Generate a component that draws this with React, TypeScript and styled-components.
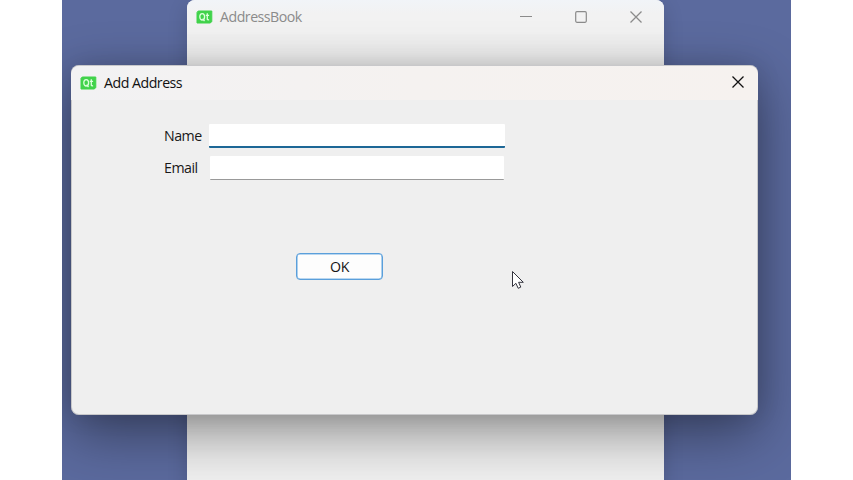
import React from "react";
import styled, { createGlobalStyle } from "styled-components";

const GlobalStyle = createGlobalStyle`
  * { box-sizing: border-box; }
  body { margin: 0; background: #fff; overflow: hidden; font-family: "Open Sans", "Noto Sans", sans-serif; }
`;

const Page = styled.main`
  width: 853px;
  height: 480px;
  padding: 0 62px;
  background: #fff;
`;

const Desktop = styled.div`
  position: relative;
  width: 729px;
  height: 480px;
  overflow: hidden;
  background: #5b6a9e;
`;

const MainWindow = styled.section`
  position: absolute;
  left: 125px;
  top: 0;
  width: 477px;
  height: 500px;
  border-radius: 8px 8px 0 0;
  background: #f0f0f0;
  box-shadow: 0 6px 20px rgba(0, 0, 0, 0.16);
`;

const DialogWindow = styled.section`
  position: absolute;
  left: 9px;
  top: 65px;
  width: 687px;
  height: 350px;
  padding-top: 1px;
  border-radius: 8px;
  overflow: hidden;
  background: #efefef;
  box-shadow: inset 0 0 0 1px rgba(130, 130, 135, 0.35), 0 18px 56px rgba(0, 0, 0, 0.42), 0 0 24px rgba(0, 0, 0, 0.1);
`;

const TitleBar = styled.header<{ $active?: boolean }>`
  display: flex;
  align-items: center;
  height: 34px;
  padding: 0 ${(p) => (p.$active ? "14px 1px 9px" : "22px 0 9px")};
  border-radius: 8px 8px 0 0;
  color: ${(p) => (p.$active ? "#111" : "#8b8b8b")};
  background: ${(p) =>
    p.$active ? "linear-gradient(90deg, #f2f2f3, #f5f2f0 50%, #f6f2ef)" : "linear-gradient(#f1f4f8, #f2f2f2 40%)"};
`;

const Title = styled.h1`
  flex: 1;
  margin: 0 0 0 7px;
  font-size: 14.2px;
  font-weight: 400;
  line-height: 20px;
  letter-spacing: -0.5px;
`;

const Controls = styled.div<{ $lift?: boolean }>`
  display: flex;
  align-items: center;
  gap: 43px;
  padding-bottom: ${(p) => (p.$lift ? 1 : 0)}px;
`;

const DialogBody = styled.form`
  display: flex;
  flex-direction: column;
  align-items: flex-start;
  padding: 24px 0 0 93px;
`;

const Field = styled.label`
  display: grid;
  grid-template-columns: 45px 296px;
  align-items: start;
  height: 32px;
  color: #181818;
  font-size: 14.2px;
  line-height: 24px;
  letter-spacing: -0.5px;
`;

const LineEdit = styled.input<{ $focused?: boolean }>`
  width: ${(p) => (p.$focused ? 296 : 294)}px;
  height: 24px;
  margin-left: ${(p) => (p.$focused ? 0 : 1)}px;
  padding: 0 6px;
  border: 0;
  border-radius: 1px;
  border-bottom: ${(p) => (p.$focused ? "2px solid #1d6796" : "1px solid #999")};
  outline: 0;
  background: #fff;
`;

const OkButton = styled.button`
  width: 87px;
  height: 27px;
  margin: 65px 0 0 132px;
  padding: 0;
  border: 1px solid #5a9fdb;
  border-radius: 4px;
  background: #fdfdfd;
  box-shadow: inset 0 0 0 0.6px #78b2e3;
  color: #151515;
  font: 14.2px/25px "Open Sans", "Noto Sans", sans-serif;
  letter-spacing: -0.4px;
`;

const Pointer = styled.svg`
  position: absolute;
  left: 449px;
  top: 270px;
`;

const LogoFrame = styled.svg`
  display: block;
  flex: none;
`;

const QtLogo = () => (
  <LogoFrame width="17" height="14" viewBox="0 0 17 14">
    <path d="M2.2 1h13.6v10.4L14.4 13H1V2.4Z" fill="#41d34b" stroke="#41d34b" strokeLinejoin="round" />
    <g fill="none" stroke="#dcffdc" strokeWidth="1.3">
      <ellipse cx="6.2" cy="6.8" rx="2.4" ry="3.2" />
      <path d="m6.7 8.7 1.8 2.5M11.3 3.2v5.7q0 1.3 1.8.8M9.8 5.3h3.3" />
    </g>
  </LogoFrame>
);

const CloseIcon = () => (
  <svg width="12" height="12" viewBox="0 0 12 12" fill="none" stroke="currentColor" strokeWidth="1.25">
    <path d="m.5.5 11 11m0-11-11 11" />
  </svg>
);

export default function App() {
  return (
    <Page>
      <GlobalStyle />
      <Desktop>
        <MainWindow>
          <TitleBar>
            <QtLogo />
            <Title>AddressBook</Title>
            <Controls>
              <svg width="12" height="12" viewBox="0 0 12 12" stroke="currentColor">
                <path d="M0 5.5h12" />
              </svg>
              <svg width="12" height="12" viewBox="0 0 12 12" fill="none" stroke="currentColor" strokeWidth="1.2">
                <rect x=".7" y=".7" width="10.6" height="10.6" rx="1.2" />
              </svg>
              <CloseIcon />
            </Controls>
          </TitleBar>
        </MainWindow>
        <DialogWindow>
          <TitleBar $active>
            <QtLogo />
            <Title>Add Address</Title>
            <Controls $lift>
              <CloseIcon />
            </Controls>
          </TitleBar>
          <DialogBody>
            <Field>
              <span>Name</span>
              <LineEdit $focused />
            </Field>
            <Field>
              <span>Email</span>
              <LineEdit />
            </Field>
            <OkButton type="button">OK</OkButton>
          </DialogBody>
        </DialogWindow>
        <Pointer width="14" height="20" viewBox="0 0 14 20">
          <path d="M1.5 1.5v15l3.4-3.2 2.3 5 2.6-1.2-2.2-4.8h4.7Z" fill="#fff" stroke="#33333d" strokeWidth="1" />
        </Pointer>
      </Desktop>
    </Page>
  );
}
